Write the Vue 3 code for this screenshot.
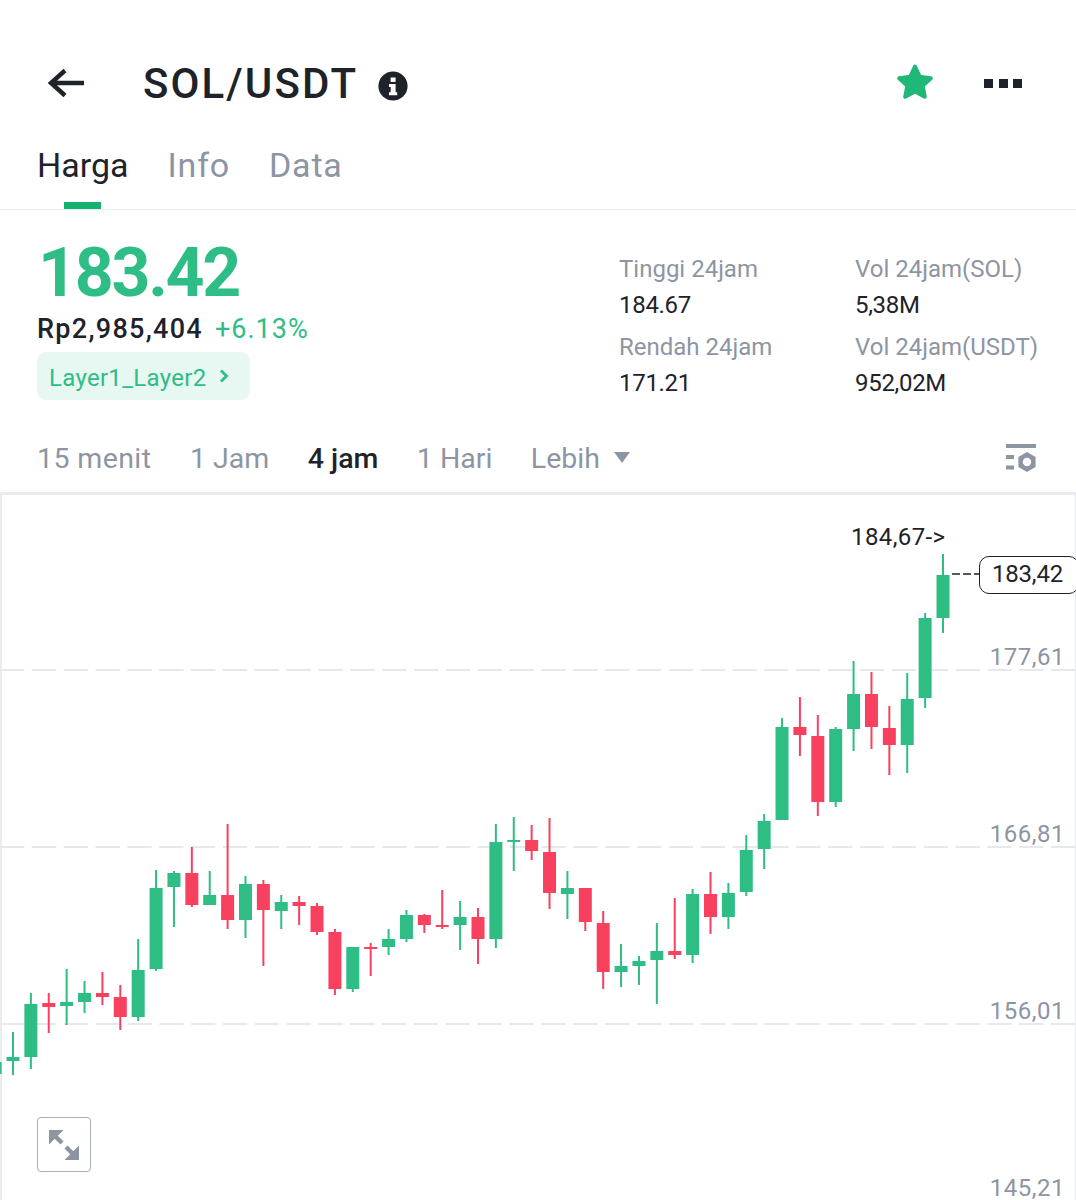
<script setup>
const G = '#2ebd85'
const R = '#f7415f'
const raw = [
  [1030,1080,1062,1074,G],
  [1032,1075,1057,1061,G],[993,1069,1004,1057,G],[993,1033,1003,1007,R],[969,1025,1002,1006,G],
  [981,1013,993,1002,G],[972,1005,993,997,R],[985,1030,997,1017,R],[939,1021,970,1017,G],
  [870,971,888,969,G],[871,927,873,887,G],[847,907,873,905,R],[871,905,895,905,G],
  [824,929,895,920,R],[876,938,884,920,G],[880,966,884,910,R],[895,929,902,911,G],
  [896,925,902,906,R],[903,935,906,932,R],[929,995,932,989,R],[947,992,947,989,G],
  [943,976,947,949,R],[929,955,939,947,G],[910,942,915,939,G],[914,933,915,925,R],
  [890,929,925,927,R],[901,950,917,925,G],[908,964,917,939,R],[824,948,842,939,G],
  [817,871,840,842,G],[825,860,840,851,R],[818,909,852,893,R],[871,919,888,894,G],
  [888,931,888,922,R],[911,989,923,972,R],[944,987,966,972,G],[956,985,961,966,G],
  [923,1004,951,960,G],[898,959,951,955,R],[889,963,894,955,G],[872,934,894,917,R],
  [883,929,893,917,G],[835,896,850,892,G],[814,869,821,849,G],[718,820,727,820,G],
  [697,756,727,735,R],[715,816,736,802,R],[727,807,729,802,G],[661,751,694,729,G],
  [672,749,694,727,R],[706,775,728,745,R],[673,773,699,745,G],[613,708,618,698,G],
  [554,633,575,618,G]
]
const candles = raw.map((c, i) => ({
  x: -4.9 + i * 17.885,
  top: c[0], bottom: c[1], bodyTop: c[2], bodyH: c[3] - c[2], color: c[4]
}))
const grids = [
  { y: 670, label: '177,61' },
  { y: 847, label: '166,81' },
  { y: 1024, label: '156,01' },
  { y: 1201, label: '145,21' }
]
const stats = [
  { label: 'Tinggi 24jam', value: '184.67' },
  { label: 'Vol 24jam(SOL)', value: '5,38M' },
  { label: 'Rendah 24jam', value: '171.21' },
  { label: 'Vol 24jam(USDT)', value: '952,02M' }
]
const frames = ['15 menit', '1 Jam', '4 jam', '1 Hari']
</script>

<template>
  <div class="page">
    <header class="top">
      <svg class="back" width="38" height="30" viewBox="0 0 38 30">
        <path d="M37 15H4M18 2.500 4 15l14 12.500" fill="none" stroke="#1e2329" stroke-width="4.400" />
      </svg>
      <h1 class="title">SOL/USDT</h1>
      <svg class="info" width="30" height="30" viewBox="0 0 30 30">
        <circle cx="15" cy="15" r="14.600" fill="#1e2329" />
        <rect x="12.600" y="6.500" width="5" height="4.400" fill="#fff" />
        <path d="M11 13h6.600v8.200h1.600v3H11v-3h1.700v-5.200H11z" fill="#fff" />
      </svg>
      <svg class="star" width="40" height="40" viewBox="0 0 40 40">
        <path d="M20 4.500l4.800 10.300 11 1.400-8.100 7.600 2.100 11L20 29.400l-9.800 5.400 2.100-11-8.100-7.600 11-1.400z" fill="#1fb877" stroke="#1fb877" stroke-width="4" stroke-linejoin="round" />
      </svg>
      <div class="dots"><i></i><i></i><i></i></div>
    </header>

    <nav class="tabs">
      <span class="tab active">Harga</span>
      <span class="tab">Info</span>
      <span class="tab">Data</span>
    </nav>

    <section class="summary">
      <div class="price-col">
        <div class="price">183.42</div>
        <div class="sub"><span class="rp">Rp2,985,404</span><span class="pct">+6.13%</span></div>
        <div class="tag">
          <span>Layer1_Layer2</span>
          <svg width="10" height="14" viewBox="0 0 10 14"><path d="M2 1.500 7.500 7 2 12.500" fill="none" stroke="#2ebd85" stroke-width="2.800" /></svg>
        </div>
      </div>
      <div class="stats">
        <div v-for="s in stats" :key="s.label" class="stat">
          <div class="stat-label">{{ s.label }}</div>
          <div class="stat-value">{{ s.value }}</div>
        </div>
      </div>
    </section>

    <div class="frames">
      <span v-for="f in frames" :key="f" class="frame" :class="{ on: f === '4 jam' }">{{ f }}</span>
      <span class="frame more">Lebih
        <svg width="16" height="11" viewBox="0 0 16 11"><path d="M0 0h16L8 11z" fill="#8d95a3" /></svg>
      </span>
      <svg class="settings" width="30" height="30" viewBox="0 0 30 30">
        <rect x="0" y="0" width="30" height="4" fill="#8d95a3" />
        <rect x="0" y="11" width="8" height="4" fill="#8d95a3" />
        <rect x="0" y="21.500" width="8" height="4" fill="#8d95a3" />
        <path fill-rule="evenodd" d="M21 8l8.600 5v10L21 28l-8.600-5V13zM21 13.800a4.200 4.200 0 1 0 0 8.400 4.200 4.200 0 0 0 0-8.400z" fill="#8d95a3" />
      </svg>
    </div>

    <section class="chart">
      <svg class="plot" width="1076" height="705" viewBox="0 495 1076 705">
        <g v-for="g in grids" :key="g.y">
          <line x1="0" x2="1076" :y1="g.y" :y2="g.y" class="grid" />
          <text x="1065" :y="g.y - 5" text-anchor="end" class="axis">{{ g.label }}</text>
        </g>
        <g v-for="(c, i) in candles" :key="i" :fill="c.color">
          <rect :x="c.x - 1" :y="c.top" width="2" :height="c.bottom - c.top" />
          <rect :x="c.x - 6.500" :y="c.bodyTop" width="13" :height="c.bodyH" />
        </g>
        <text x="851" y="545" class="high">184,67-&gt;</text>
        <line x1="952" x2="979" y1="574" y2="574" class="last" />
      </svg>
      <div class="last-box">183,42</div>
      <div class="expand">
        <svg width="32" height="32" viewBox="0 0 32 32">
          <path d="M1 1h14.500L1 15.500zM31 31H16.500L31 16.500z" fill="#8d95a3" />
          <path d="M6 6 14 14M18 18 26 26" stroke="#8d95a3" stroke-width="4.500" />
        </svg>
      </div>
    </section>
  </div>
</template>

<style scoped>
.page {
  width: 1076px;
  height: 1200px;
  overflow: hidden;
  background: #fff;
  font-family: Roboto, "Liberation Sans", sans-serif;
  color: #1e2329;
}
.top {
  display: flex;
  align-items: center;
  height: 56px;
  margin-top: 56px;
  padding: 0 54px 0 47px;
}
.back { margin-top: -3px; }
.title {
  margin: 0 0 0 58px;
  font-size: 42px;
  font-weight: 500;
  letter-spacing: 2.100px;
  line-height: 56px;
}
.info { margin-left: 20px; margin-top: 3px; }
.star { margin-left: auto; margin-top: -4px; margin-right: -1px; }
.dots { display: flex; gap: 5.500px; margin-left: 50px; margin-top: -2px; }
.dots i { display: block; width: 9px; height: 9px; background: #1e2329; }
.tabs {
  display: flex;
  gap: 39px;
  padding: 0 0 0 37px;
  height: 98px;
  border-bottom: 1px solid #eaecef;
  box-sizing: border-box;
}
.tab {
  position: relative;
  font-size: 34px;
  line-height: 40px;
  margin-top: 33px;
  letter-spacing: 0.800px;
  color: #8d95a3;
}
.tab.active { color: #1e2329; letter-spacing: 0; }
.tab.active::after {
  content: "";
  position: absolute;
  left: 27px;
  width: 37px;
  height: 7px;
  top: 57px;
  background: #13b26e;
}
.summary {
  display: flex;
  justify-content: space-between;
  height: 205px;
}
.price-col { padding-left: 37px; }
.price {
  font-size: 68px;
  font-weight: 700;
  line-height: 80px;
  color: #2ebd85;
  margin-top: 23px;
  margin-left: 1px;
  letter-spacing: -2.300px;
}
.sub { display: flex; gap: 12px; line-height: 32px; font-size: 27px; }
.rp { font-weight: 500; letter-spacing: 1.300px; }
.pct { color: #2ebd85; letter-spacing: 1px; }
.tag {
  display: inline-flex;
  align-items: center;
  gap: 13px;
  height: 48px;
  width: 213px;
  box-sizing: border-box;
  margin-top: 7px;
  padding: 3px 0 0 12px;
  border-radius: 9px;
  background: #e7f7f1;
  color: #2ebd85;
  font-size: 24px;
  letter-spacing: 0.300px;
}
.tag svg { margin-top: -4px; }
.stats {
  display: grid;
  grid-template-columns: 236px 221px;
  margin-top: 39px;
  grid-auto-rows: 78px;
}
.stat-label { font-size: 24px; line-height: 40px; color: #8d95a3; }
.stat-value { font-size: 24px; line-height: 33px; color: #1e2329; letter-spacing: -0.300px; }
.frames {
  display: flex;
  align-items: center;
  height: 66px;
  padding: 0 40px 0 37px;
  margin-top: 11px;
}
.frame {
  font-size: 28.500px;
  color: #8d95a3;
  margin-right: 38.500px;
  line-height: 66px;
}
.frame:first-child { letter-spacing: 0.400px; }
.frame.on { color: #1e2329; font-weight: 500; }
.more { display: inline-flex; align-items: center; gap: 14px; }
.more svg { margin-top: -4px; }
.settings { margin-left: auto; }
.chart {
  position: relative;
  box-sizing: border-box;
  height: 708px;
  border-top: 3px solid #eaecef;
  border-left: 2px solid #eaecef;
  border-right: 1px solid #eaecef;
}
.plot { display: block; margin-left: -2px; }
.grid { stroke: #e6e8ee; stroke-width: 2; stroke-dasharray: 24.300 7.550; }
.axis { font-size: 24px; fill: #8d95a3; font-family: Roboto, sans-serif; letter-spacing: 0.500px; }
.high { font-size: 24px; fill: #1e2329; font-family: Roboto, sans-serif; letter-spacing: 0.400px; }
.last { stroke: #1e2329; stroke-width: 1.500; stroke-dasharray: 8 3; }
.last-box {
  position: absolute;
  left: 977px;
  top: 61px;
  box-sizing: border-box;
  width: 100px;
  height: 38px;
  border: 1.500px solid #1e2329;
  border-radius: 10px;
  background: #fff;
  font-size: 24px;
  line-height: 35px;
  padding-left: 12px;
  letter-spacing: -0.200px;
}
.expand {
  position: absolute;
  left: 35px;
  top: 622px;
  width: 54px;
  height: 55px;
  box-sizing: border-box;
  border: 1.500px solid #a8aeb8;
  border-radius: 4px;
  display: flex;
  align-items: center;
  justify-content: center;
  background: #fff;
}
</style>
<style>
html, body { margin: 0; background: #fff; }
</style>
